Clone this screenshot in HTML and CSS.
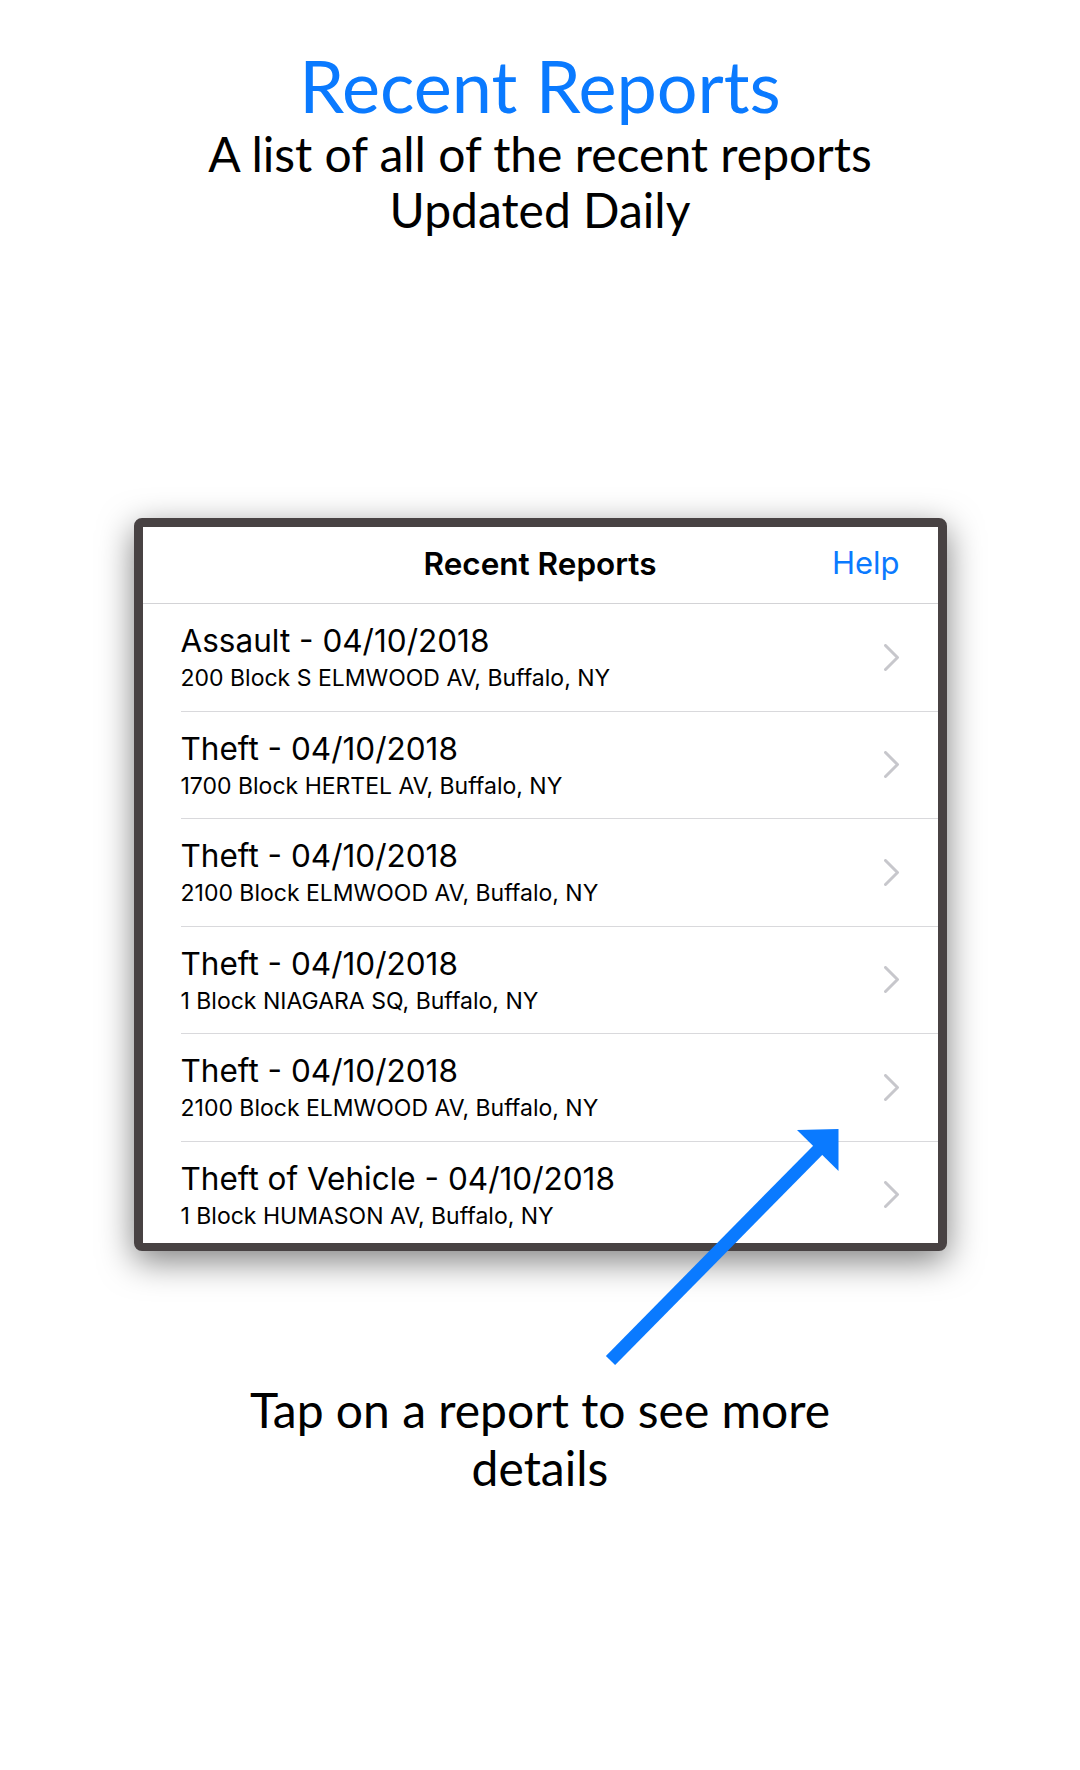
FILE: index.html
```html
<!DOCTYPE html>
<html lang="en">
<head>
<meta charset="utf-8">
<title>Recent Reports</title>
<link rel="stylesheet" href="styles.css">
</head>
<body>
<div class="page">
  <header class="hero">
    <h1 class="hero-title">Recent Reports</h1>
    <p class="hero-sub">A list of all of the recent reports<br>Updated Daily</p>
  </header>

  <section class="device">
    <div class="screen">
      <div class="navbar">
        <span class="nav-title">Recent Reports</span>
        <span class="nav-help">Help</span>
      </div>
      <ul class="list">
        <li class="row"><div class="row-inner"><div class="row-text"><div class="row-title">Assault - 04/10/2018</div><div class="row-sub">200 Block S ELMWOOD AV, Buffalo, NY</div></div><svg class="chev" viewBox="0 0 16 27" width="16" height="27"><polyline points="1.5,1.5 13.5,13.5 1.5,25.5"/></svg></div></li>
        <li class="row"><div class="row-inner"><div class="row-text"><div class="row-title">Theft - 04/10/2018</div><div class="row-sub">1700 Block HERTEL AV, Buffalo, NY</div></div><svg class="chev" viewBox="0 0 16 27" width="16" height="27"><polyline points="1.5,1.5 13.5,13.5 1.5,25.5"/></svg></div></li>
        <li class="row"><div class="row-inner"><div class="row-text"><div class="row-title">Theft - 04/10/2018</div><div class="row-sub">2100 Block ELMWOOD AV, Buffalo, NY</div></div><svg class="chev" viewBox="0 0 16 27" width="16" height="27"><polyline points="1.5,1.5 13.5,13.5 1.5,25.5"/></svg></div></li>
        <li class="row"><div class="row-inner"><div class="row-text"><div class="row-title">Theft - 04/10/2018</div><div class="row-sub">1 Block NIAGARA SQ, Buffalo, NY</div></div><svg class="chev" viewBox="0 0 16 27" width="16" height="27"><polyline points="1.5,1.5 13.5,13.5 1.5,25.5"/></svg></div></li>
        <li class="row"><div class="row-inner"><div class="row-text"><div class="row-title">Theft - 04/10/2018</div><div class="row-sub">2100 Block ELMWOOD AV, Buffalo, NY</div></div><svg class="chev" viewBox="0 0 16 27" width="16" height="27"><polyline points="1.5,1.5 13.5,13.5 1.5,25.5"/></svg></div></li>
        <li class="row row-last"><div class="row-inner"><div class="row-text"><div class="row-title">Theft of Vehicle - 04/10/2018</div><div class="row-sub">1 Block HUMASON AV, Buffalo, NY</div></div><svg class="chev" viewBox="0 0 16 27" width="16" height="27"><polyline points="1.5,1.5 13.5,13.5 1.5,25.5"/></svg></div></li>
      </ul>
    </div>
  </section>

  <p class="caption">Tap on a report to see more<br>details</p>

  <svg class="arrow" viewBox="0 0 1080 1770" width="1080" height="1770" aria-hidden="true">
    <line x1="610.5" y1="1360.5" x2="822" y2="1146" stroke="#0a7aff" stroke-width="13"/>
    <polygon points="838.5,1129 797,1130 838.5,1171" fill="#0a7aff"/>
  </svg>
</div>
</body>
</html>
```

FILE: styles.css
```css
html, body {
  margin: 0;
  padding: 0;
  background: #ffffff;
}

.page {
  position: relative;
  width: 1080px;
  height: 1770px;
  overflow: hidden;
  font-family: Lato, "Noto Sans", sans-serif;
  color: #000000;
}

.hero {
  padding-top: 49px;
  text-align: center;
}

.hero-title {
  margin: 0;
  font-family: Lato, sans-serif;
  font-weight: 400;
  font-size: 72px;
  line-height: 72px;
  color: #0a7aff;
}

.hero-sub {
  margin: 5px 0 0;
  font-family: Lato, sans-serif;
  font-size: 48px;
  line-height: 56px;
}

.device {
  width: 813px;
  height: 733px;
  box-sizing: border-box;
  margin: 280px auto 0;
  border: 9px solid #484243;
  border-bottom-width: 8px;
  border-radius: 8px;
  background: #ffffff;
  box-shadow: 0 10px 34px rgba(0, 0, 0, 0.5);
  overflow: hidden;
}

.screen {
  height: 100%;
  overflow: hidden;
  font-family: Inter, Roboto, sans-serif;
}

.navbar {
  position: relative;
  height: 76px;
  border-bottom: 1px solid #d3d3d6;
  display: flex;
  align-items: center;
  justify-content: center;
}

.nav-title {
  font-size: 31.5px;
  font-weight: 600;
  color: #000000;
  margin-top: -4px;
}

.nav-help {
  position: absolute;
  right: 38px;
  top: 50%;
  transform: translateY(-50%);
  margin-top: -3px;
  font-size: 31px;
  color: #0a7aff;
}

.list {
  list-style: none;
  margin: 0;
  padding: 0;
}

.row {
  padding-left: 38px;
}

.row-inner {
  height: 106.5px;
  border-bottom: 1px solid #d9d9dc;
  display: flex;
  align-items: center;
  justify-content: space-between;
  padding-right: 38px;
}

.row-last .row-inner {
  border-bottom: none;
}

.row-text {
  align-self: flex-start;
  padding-top: 17px;
}

.row-title {
  font-size: 31.5px;
  line-height: 40px;
  color: #000000;
}

.row-sub {
  margin-top: 3px;
  font-size: 23px;
  line-height: 28px;
  color: #000000;
}

.chev {
  display: block;
  flex: none;
}

.chev polyline {
  fill: none;
  stroke: #c7c7cc;
  stroke-width: 3;
  stroke-linecap: round;
  stroke-linejoin: round;
}

.caption {
  margin: 130px 0 0;
  text-align: center;
  font-family: Lato, sans-serif;
  font-size: 48px;
  line-height: 58px;
}

.arrow {
  position: absolute;
  left: 0;
  top: 0;
  pointer-events: none;
}
```
